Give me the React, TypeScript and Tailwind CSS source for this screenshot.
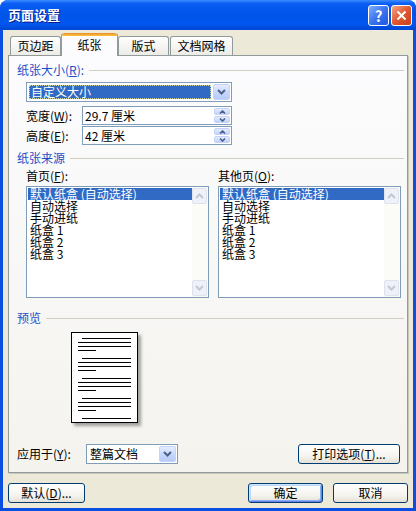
// Page setup dialog (Windows XP look) — paper tab
import React from 'react';

function Chevron({ up = false, small = false }: { up?: boolean; small?: boolean }) {
  if (small) {
    return (
      <svg width="7" height="4" viewBox="0 0 7 4">
        <path d={up ? 'M1 3.5l2.5-2.5L6 3.5' : 'M1 0.5l2.5 2.5L6 0.5'} stroke="#4d6185" strokeWidth="1.6" fill="none" />
      </svg>
    );
  }
  return (
    <svg width="9" height="6" viewBox="0 0 9 6">
      <path d={up ? 'M1 5l3.5-3.5L8 5' : 'M1 1l3.5 3.5L8 1'} stroke="#4d6185" strokeWidth="2" fill="none" />
    </svg>
  );
}

function GrayArrow({ up = false }: { up?: boolean }) {
  return (
    <svg width="9" height="6" viewBox="0 0 9 6">
      <path d={up ? 'M1 5l3.5-3.5L8 5' : 'M1 1l3.5 3.5L8 1'} stroke="#c3c8d3" strokeWidth="2" fill="none" />
    </svg>
  );
}

function DropButton() {
  return (
    <div className="w-[17px] m-px ml-0 rounded-[2px] border border-[#c3d3fb] bg-[linear-gradient(180deg,#e4ecff_0%,#c8d8fd_50%,#b7cbf8_100%)] flex items-center justify-center">
      <Chevron />
    </div>
  );
}

function Spinner() {
  return (
    <div className="w-[16px] m-px ml-0 flex flex-col gap-px">
      <div className="flex-1 rounded-[2px] border border-[#c3d3fb] bg-[linear-gradient(180deg,#e4ecff,#bfd1fa)] flex items-center justify-center">
        <Chevron up small />
      </div>
      <div className="flex-1 rounded-[2px] border border-[#c3d3fb] bg-[linear-gradient(180deg,#e4ecff,#bfd1fa)] flex items-center justify-center">
        <Chevron small />
      </div>
    </div>
  );
}

function GroupLabel({ children }: { children: React.ReactNode }) {
  return (
    <div className="flex items-center h-[14px] pl-[8px] pr-[3px]">
      <span className="text-[#1e4fc8] whitespace-nowrap leading-[14px]">{children}</span>
      <div className="ml-[5px] flex-1 h-px bg-[#d0d0bf]" />
    </div>
  );
}

function Scrollbar() {
  return (
    <div className="w-[16px] flex flex-col bg-[#fbfbf8] py-px pr-px">
      <div className="h-[16px] rounded-[2px] border border-[#dde2ec] bg-[#eef1f8] flex items-center justify-center">
        <GrayArrow up />
      </div>
      <div className="flex-1" />
      <div className="h-[16px] rounded-[2px] border border-[#dde2ec] bg-[#eef1f8] flex items-center justify-center">
        <GrayArrow />
      </div>
    </div>
  );
}

const trays = ['默认纸盒 (自动选择)', '自动选择', '手动进纸', '纸盒 1', '纸盒 2', '纸盒 3'];

function TrayList() {
  return (
    <div className="w-[183px] h-[112px] border border-[#7f9db9] bg-white flex">
      <div className="flex-1 pt-px pl-px">
        {trays.map((t, i) => (
          <div
            key={t}
            className={
              i === 0
                ? 'h-[12px] leading-[12px] pl-[2px] whitespace-nowrap bg-[#316ac5] text-white'
                : 'h-[12px] leading-[12px] pl-[2px] whitespace-nowrap'
            }
          >
            {t}
          </div>
        ))}
      </div>
      <Scrollbar />
    </div>
  );
}

function LineGroup() {
  return (
    <div className="flex flex-col gap-[3px]">
      <div className="ml-[10px] w-[49px] h-px bg-black" />
      <div className="ml-[6px] w-[53px] h-px bg-black" />
      <div className="ml-[6px] w-[53px] h-px bg-black" />
      <div className="ml-[6px] w-[18px] h-px bg-black" />
    </div>
  );
}

function XPButton({ children, w, isDefault = false }: { children: React.ReactNode; w: string; isDefault?: boolean }) {
  return (
    <div
      className={
        (isDefault
          ? 'shadow-[inset_1px_1px_0_#cee7ff,inset_-1px_-1px_0_#6982ee,inset_2px_2px_0_#bcd4f6,inset_-2px_-2px_0_#89adf4] '
          : '') +
        w +
        ' h-[20px] rounded-[3px] border border-[#003c74] bg-[linear-gradient(180deg,#ffffff_0%,#f5f4ef_60%,#e4e1d6_100%)] flex items-center justify-center whitespace-nowrap'
      }
    >
      {children}
    </div>
  );
}

export default function App() {
  return (
    <div className="w-[416px] h-[511px] rounded-t-[8px] overflow-hidden bg-[#0a4fe0] flex flex-col font-['Noto_Sans_CJK_SC','Noto_Sans',sans-serif] text-[12px] text-black">
      {/* Title bar */}
      <div className="h-[30px] shrink-0 flex items-center pl-[8px] pr-[4px] bg-[linear-gradient(180deg,#3c8cff_0%,#0a5ef5_12%,#0054e8_45%,#0056ee_80%,#0046d4_100%)]">
        <span className="text-white font-bold text-[13px] [text-shadow:1px_1px_0_#0a1e8c]">页面设置</span>
        <div className="ml-auto flex gap-[2px]">
          <div className="w-[21px] h-[21px] rounded-[3px] border border-white bg-[linear-gradient(135deg,#7fb0ff_0%,#3a74f0_50%,#2057e0_100%)] flex items-center justify-center text-white font-bold text-[15px] leading-none">
            ?
          </div>
          <div className="w-[21px] h-[21px] rounded-[3px] border border-white bg-[linear-gradient(135deg,#f2a58c_0%,#e0582f_50%,#c8401b_100%)] flex items-center justify-center">
            <svg width="11" height="11" viewBox="0 0 11 11">
              <path d="M1.5 1.5l8 8M9.5 1.5l-8 8" stroke="white" strokeWidth="2" />
            </svg>
          </div>
        </div>
      </div>

      {/* Client area */}
      <div className="mx-[3px] mb-[3px] flex-1 bg-[#ece9d8] px-[5px] flex flex-col">
        {/* Tabs */}
        <div className="h-[22px] mt-[3px] pl-[2px] flex items-end">
          <div className="w-[51px] h-[19px] rounded-t-[3px] border border-b-0 border-[#919b9c] bg-[linear-gradient(180deg,#ffffff,#ecebe5)] flex items-center justify-center">
            页边距
          </div>
          <div className="relative z-10 -mb-px w-[57px] h-[23px] rounded-t-[3px] border-x border-[#919b9c] bg-[#fcfcfe] flex flex-col">
            <div className="h-[3px] rounded-t-[3px] bg-[linear-gradient(180deg,#e68b2c,#ffc73c)]" />
            <div className="flex-1 flex items-center justify-center pb-[2px]">纸张</div>
          </div>
          <div className="w-[51px] h-[19px] rounded-t-[3px] border border-b-0 border-[#919b9c] bg-[linear-gradient(180deg,#ffffff,#ecebe5)] flex items-center justify-center">
            版式
          </div>
          <div className="ml-px w-[63px] h-[19px] rounded-t-[3px] border border-b-0 border-[#919b9c] bg-[linear-gradient(180deg,#ffffff,#ecebe5)] flex items-center justify-center">
            文档网格
          </div>
        </div>

        {/* Tab panel */}
        <div className="h-[418px] border border-[#919b9c] bg-[linear-gradient(180deg,#fcfcfe,#f4f3ee)] shadow-[1px_1px_0_#c9c7ba] flex flex-col">
          <div className="mt-[7px]">
            <GroupLabel>
              纸张大小(<u>R</u>):
            </GroupLabel>
          </div>

          <div className="mt-[5px] pl-[17px]">
            <div className="w-[206px] h-[20px] border border-[#7f9db9] bg-white flex">
              <div className="flex-1 m-[2px] bg-[#316ac5] text-white outline-dotted outline-1 outline-[#cfd8a0] -outline-offset-1 flex items-center pl-[2px] leading-none">
                自定义大小
              </div>
              <DropButton />
            </div>
          </div>

          <div className="mt-[4px] pl-[17px] flex items-center">
            <span className="w-[56px]">
              宽度(<u>W</u>):
            </span>
            <div className="w-[150px] h-[19px] border border-[#7f9db9] bg-white flex">
              <div className="flex-1 flex items-center pl-[2px] leading-none">29.7 厘米</div>
              <Spinner />
            </div>
          </div>

          <div className="mt-px pl-[17px] flex items-center">
            <span className="w-[56px]">
              高度(<u>E</u>):
            </span>
            <div className="w-[150px] h-[19px] border border-[#7f9db9] bg-white flex">
              <div className="flex-1 flex items-center pl-[2px] leading-none">42 厘米</div>
              <Spinner />
            </div>
          </div>

          <div className="mt-[6px]">
            <GroupLabel>纸张来源</GroupLabel>
          </div>

          <div className="mt-[4px] pl-[17px] flex gap-[9px] h-[14px] leading-[14px]">
            <span className="w-[183px]">
              首页(<u>F</u>):
            </span>
            <span>
              其他页(<u>O</u>):
            </span>
          </div>

          <div className="mt-[3px] pl-[17px] flex gap-[9px]">
            <TrayList />
            <TrayList />
          </div>

          <div className="mt-[13px]">
            <GroupLabel>预览</GroupLabel>
          </div>

          <div className="mt-[7px] pl-[62px]">
            <div className="w-[67px] h-[91px] border border-black bg-white shadow-[3px_3px_3px_rgba(0,0,0,0.35)] flex flex-col gap-[7px] pt-[5px]">
              <LineGroup />
              <LineGroup />
              <LineGroup />
              <LineGroup />
              <div className="ml-[10px] w-[49px] h-px bg-black" />
            </div>
          </div>

          <div className="mt-[21px] pl-[8px] pr-[7px] flex items-center">
            <span className="w-[69px]">
              应用于(<u>Y</u>):
            </span>
            <div className="w-[92px] h-[20px] border border-[#7f9db9] bg-white flex">
              <div className="flex-1 flex items-center pl-[3px] leading-none">整篇文档</div>
              <DropButton />
            </div>
            <div className="ml-auto">
              <XPButton w="w-[102px]">
                打印选项(<u>T</u>)...
              </XPButton>
            </div>
          </div>
        </div>

        {/* Bottom buttons */}
        <div className="mt-[10px] flex items-center">
          <XPButton w="w-[77px]">
            默认(<u>D</u>)...
          </XPButton>
          <div className="ml-auto flex gap-[10px]">
            <XPButton w="w-[75px]" isDefault>
              确定
            </XPButton>
            <XPButton w="w-[75px]">取消</XPButton>
          </div>
        </div>
      </div>
    </div>
  );
}
